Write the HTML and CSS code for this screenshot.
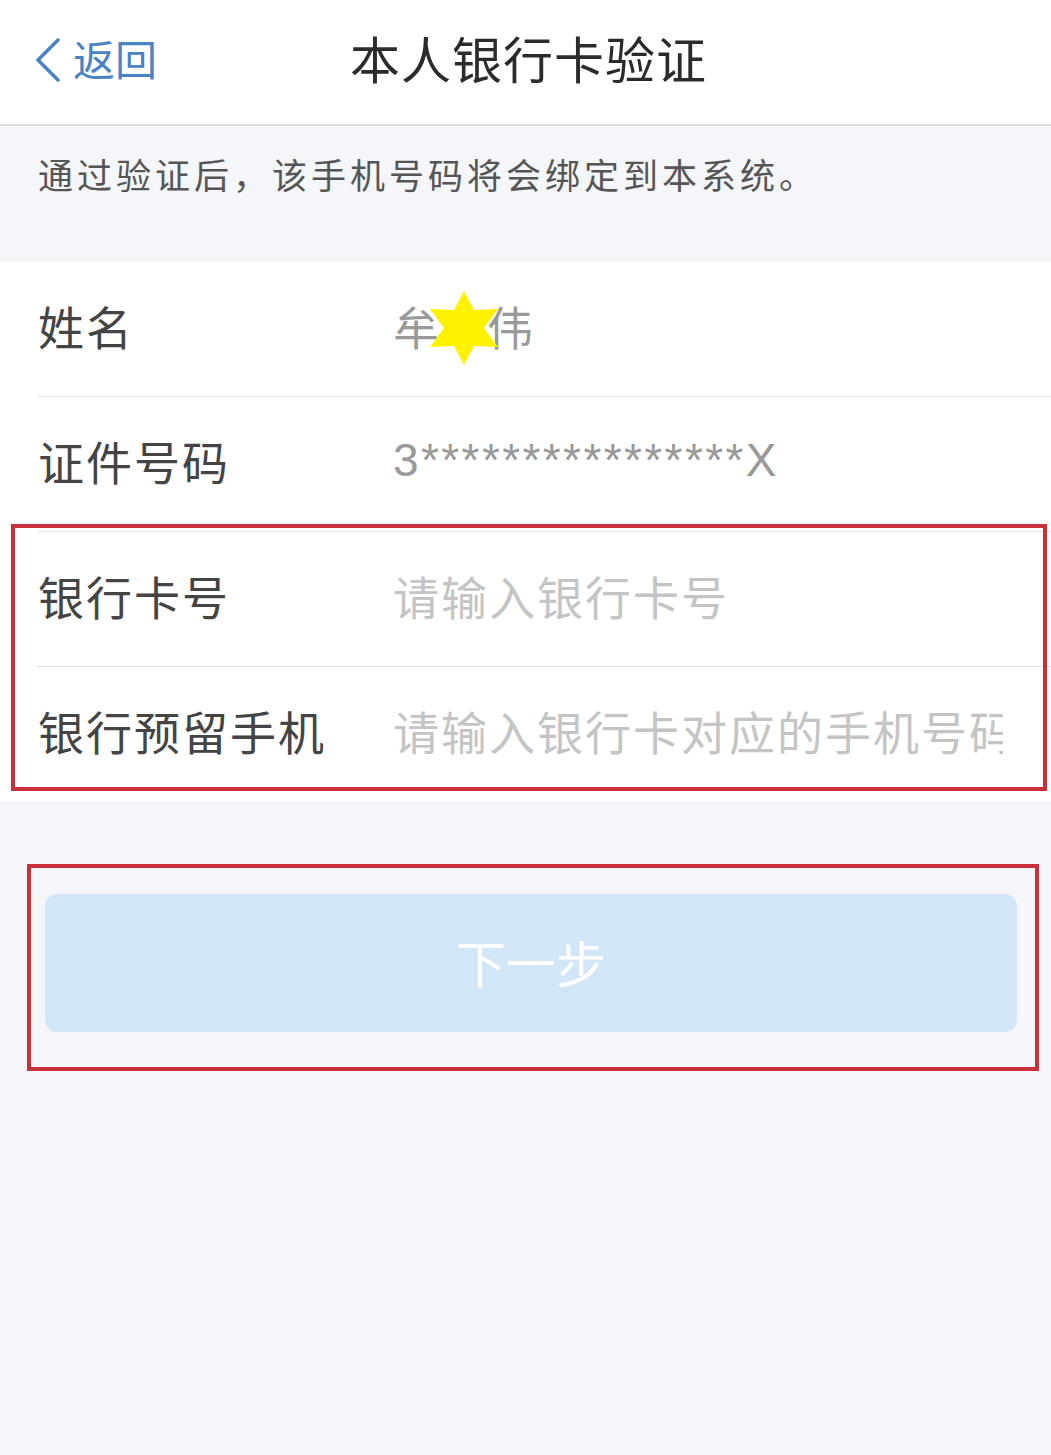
FILE: index.html
```html
<html>
    <head>
        <title>本人银行卡验证</title>
        <link rel="stylesheet" href="styles.css">
    </head>
    <body>
        <div class="navbar">
            <a class="nav-back" href="#">
                <svg class="nav-chevron" width="26" height="44" viewBox="0 0 26 44">
                    <path d="M23 2 L3 22 L23 42" fill="none" stroke="#4a82c4" stroke-width="3.5" stroke-linecap="round" stroke-linejoin="round"/>
                </svg>
                <span>返回</span>
            </a>
            <div class="nav-title">本人银行卡验证</div>
            <div></div>
        </div>

        <div class="notice">通过验证后，该手机号码将会绑定到本系统。</div>

        <div class="form-list">
            <div class="form-row">
                <div class="form-label">姓名</div>
                <div class="form-value">牟<span class="masked"><svg class="star" width="68" height="74" viewBox="0 0 68 74"><polygon points="34,0 44,19 68,18 54,37 68,56 44,55 34,74 24,55 0,56 14,37 0,18 24,19" fill="#fff200"/></svg></span>伟</div>
            </div>
            <div class="form-row">
                <div class="form-label">证件号码</div>
                <div class="form-value idno">3****************X</div>
            </div>
            <div class="form-group">
                <div class="form-row">
                    <div class="form-label">银行卡号</div>
                    <div class="form-value placeholder">请输入银行卡号</div>
                </div>
                <div class="form-row">
                    <div class="form-label">银行预留手机</div>
                    <div class="form-value placeholder">请输入银行卡对应的手机号码</div>
                </div>
            </div>
        </div>

        <div class="action">
            <button class="next-btn" disabled>下一步</button>
        </div>
    </body>
</html>
```

FILE: styles.css
```css
body {
    margin: 0;
    background-color: #f4f6fa;
    font-family: "Noto Sans CJK SC", "Noto Sans", sans-serif;
    width: 1051px;
    min-height: 1455px;
}

/* top bar */
.navbar {
    display: grid;
    grid-template-columns: 1fr auto 1fr;
    align-items: center;
    height: 124px;
    background-color: white;
    border-bottom: 2px solid #dcdcdc;
}

.nav-back {
    display: flex;
    align-items: center;
    gap: 12px;
    padding: 0 0 10px 35px;
    color: #4a82c4;
    font-size: 42px;
    text-decoration: none;
}

.nav-chevron {
    margin-top: 6px;
}

.nav-title {
    font-size: 50px;
    letter-spacing: 1px;
    color: #2b2b2b;
    padding: 0 0 10px 6px;
}

/* hint text */
.notice {
    height: 136px;
    padding: 22px 0 0 38px;
    box-sizing: border-box;
    font-size: 35px;
    letter-spacing: 4px;
    color: #555;
}

/* form */
.form-list {
    background-color: white;
}

.form-row {
    display: flex;
    align-items: center;
    height: 134px;
    margin-left: 37px;
    padding: 0 0 8px 1px;
    box-sizing: border-box;
}

.form-row + .form-row,
.form-group .form-row:first-child {
    height: 135px;
    border-top: 1px solid #e2e2e2;
}

.form-label {
    width: 355px;
    font-size: 46px;
    letter-spacing: 2px;
    color: #444;
}

.form-value {
    font-size: 46px;
    letter-spacing: 2px;
    color: #999;
    white-space: nowrap;
}

.masked {
    display: inline-block;
    position: relative;
    width: 46px;
    height: 10px;
}

.star {
    position: absolute;
    left: -11px;
    top: -44px;
}

.idno {
    font-family: "Liberation Sans", sans-serif;
    font-size: 46px;
    letter-spacing: 2.4px;
}

.placeholder {
    color: #c4c4c4;
    width: 610px;
    overflow: hidden;
}

/* red annotation around the bank fields */
.form-group {
    position: relative;
}

.form-group::after {
    content: "";
    position: absolute;
    top: -7px;
    left: 11px;
    right: 4px;
    bottom: 10px;
    border: 4px solid #c9303a;
    pointer-events: none;
}

/* button */
.action {
    position: relative;
    margin: 63px 12px 0 27px;
    padding: 30px 22px 39px 18px;
}

.action::after {
    content: "";
    position: absolute;
    top: 0;
    left: 0;
    right: 0;
    bottom: 0;
    border: 4px solid #c9303a;
    pointer-events: none;
}

.next-btn {
    display: block;
    width: 100%;
    height: 138px;
    padding-bottom: 6px;
    border: none;
    border-radius: 12px;
    background-color: #d3e6f8;
    color: white;
    font-family: "Noto Sans CJK SC", sans-serif;
    font-size: 50px;
}
```
